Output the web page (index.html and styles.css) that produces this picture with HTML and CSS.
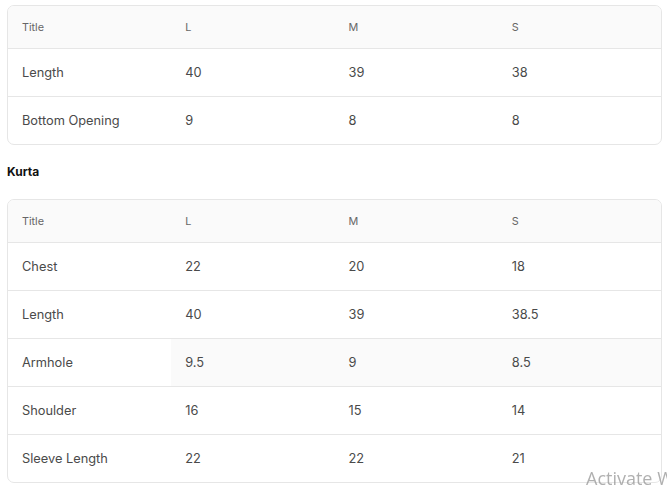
FILE: index.html
```html
<!DOCTYPE html>
<html>
<head>
<meta charset="utf-8">
<link rel="stylesheet" href="styles.css">
</head>
<body>
<div class="page">
  <div class="table-wrap">
    <table class="size-table">
      <thead>
        <tr><th>Title</th><th>L</th><th>M</th><th>S</th></tr>
      </thead>
      <tbody>
        <tr><td>Length</td><td>40</td><td>39</td><td>38</td></tr>
        <tr class="last"><td>Bottom Opening</td><td>9</td><td>8</td><td>8</td></tr>
      </tbody>
    </table>
  </div>

  <h4 class="section-title">Kurta</h4>

  <div class="table-wrap">
    <table class="size-table">
      <thead>
        <tr><th>Title</th><th>L</th><th>M</th><th>S</th></tr>
      </thead>
      <tbody>
        <tr><td>Chest</td><td>22</td><td>20</td><td>18</td></tr>
        <tr><td>Length</td><td>40</td><td>39</td><td>38.5</td></tr>
        <tr class="hover"><td>Armhole</td><td>9.5</td><td>9</td><td>8.5</td></tr>
        <tr><td>Shoulder</td><td>16</td><td>15</td><td>14</td></tr>
        <tr class="last"><td>Sleeve Length</td><td>22</td><td>22</td><td>21</td></tr>
      </tbody>
    </table>
  </div>
</div>
<div class="watermark">Activate Windows</div>
</body>
</html>
```
FILE: styles.css
```css
html, body {
  margin: 0;
  padding: 0;
  background: #ffffff;
  overflow: hidden;
}
body {
  font-family: Inter, "Noto Sans", Arial, sans-serif;
  color: #4a4a4a;
}
.page {
  padding: 5px 0 0 7px;
  width: 655px;
}
.table-wrap {
  border: 1px solid #e6e6e6;
  border-radius: 7px;
  overflow: hidden;
}
.size-table {
  width: 100%;
  border-collapse: separate;
  border-spacing: 0;
  table-layout: fixed;
}
.size-table th {
  background: #fafafa;
  font-size: 10.8px;
  font-weight: 400;
  color: #666;
  text-align: left;
  height: 42px;
  padding: 0 0 0 14px;
  border-bottom: 1px solid #e6e6e6;
}
.size-table td {
  font-size: 12.8px;
  color: #4a4a4a;
  height: 47px;
  padding: 0 0 0 14px;
  border-bottom: 1px solid #e6e6e6;
}
.size-table tr.last td {
  border-bottom: none;
}
.size-table tr.hover td + td {
  background: #fafafa;
}
.section-title {
  margin: 18px 0 19px 0;
  font-size: 12px;
  line-height: 17px;
  font-weight: 700;
  color: #111;
}
.watermark {
  position: fixed;
  left: 586px;
  top: 466px;
  font-family: "Open Sans", "Noto Sans", sans-serif;
  font-size: 18px;
  color: rgba(150, 150, 150, 0.75);
  white-space: nowrap;
}
```
